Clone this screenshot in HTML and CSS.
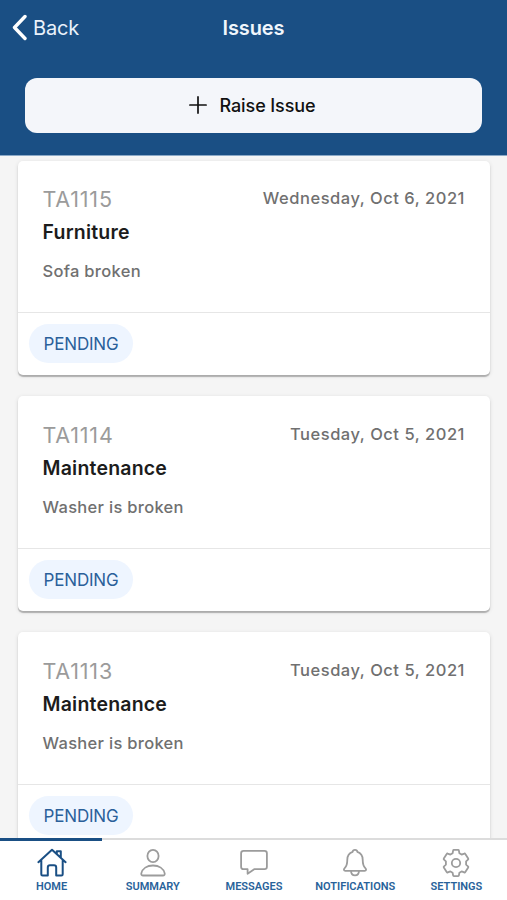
FILE: index.html
```html
<!DOCTYPE html>
<html lang="en">
<head>
    <meta charset="UTF-8">
    <meta name="viewport" content="width=device-width, initial-scale=1.0">
    <title>Issues</title>
    <link rel="stylesheet" href="styles.css">
</head>
<body>

    <header class="header">
        <div class="title-bar">
            <a class="back" href="#">
                <svg width="15" height="27" viewBox="0 0 15 27"><path d="M13 2.5 2.5 13.5 13 24.5"/></svg>
                <span>Back</span>
            </a>
            <h1>Issues</h1>
        </div>
        <button class="raise-issue">
            <svg width="18" height="18" viewBox="0 0 18 18"><path d="M9 .9v16.2M.9 9h16.2"/></svg>
            <span>Raise Issue</span>
        </button>
    </header>

    <main class="issues">
        <div class="card">
            <div class="card-body">
                <div class="card-top">
                    <span class="issue-id">TA1115</span>
                    <span class="date">Wednesday, Oct 6, 2021</span>
                </div>
                <h2>Furniture</h2>
                <p class="description">Sofa broken</p>
            </div>
            <div class="card-footer"><span class="status">PENDING</span></div>
        </div>

        <div class="card">
            <div class="card-body">
                <div class="card-top">
                    <span class="issue-id">TA1114</span>
                    <span class="date">Tuesday, Oct 5, 2021</span>
                </div>
                <h2>Maintenance</h2>
                <p class="description">Washer is broken</p>
            </div>
            <div class="card-footer"><span class="status">PENDING</span></div>
        </div>

        <div class="card">
            <div class="card-body">
                <div class="card-top">
                    <span class="issue-id">TA1113</span>
                    <span class="date">Tuesday, Oct 5, 2021</span>
                </div>
                <h2>Maintenance</h2>
                <p class="description">Washer is broken</p>
            </div>
            <div class="card-footer"><span class="status">PENDING</span></div>
        </div>
    </main>

    <nav class="tabs">
        <a class="tab active" href="#">
            <svg width="30" height="30" viewBox="0 0 30 30">
                <path d="M1.4 14.2 15 1.8l13.6 12.4M4.3 12v14.2q0 1.3 1.3 1.3h5.2v-8q0-2.2 2.2-2.2h4q2.2 0 2.2 2.2v8h5.2q1.3 0 1.3-1.3V12M19.8 5.7V3.2h4v6.3"/>
            </svg>
            <span>HOME</span>
        </a>
        <a class="tab" href="#">
            <svg width="30" height="30" viewBox="0 0 30 30">
                <ellipse cx="15" cy="8" rx="5.6" ry="6.2"/>
                <path d="M3.3 25.4C4.3 20.6 9 17.5 15 17.5s10.7 3.1 11.7 7.9q.3 2.1-1.8 2.1H5.1q-2.1 0-1.8-2.1Z"/>
            </svg>
            <span>SUMMARY</span>
        </a>
        <a class="tab" href="#">
            <svg width="30" height="30" viewBox="0 0 30 30">
                <path d="M4.5 2.8h21q2.4 0 2.4 2.4v13.6q0 2.4-2.4 2.4H15.2l-6.6 4.6v-4.6H4.5q-2.4 0-2.4-2.4V5.2q0-2.4 2.4-2.4Z"/>
            </svg>
            <span>MESSAGES</span>
        </a>
        <a class="tab" href="#">
            <svg width="30" height="30" viewBox="0 0 30 30">
                <path d="M15 1.8c1.5 0 2.2.8 2.3 2 3.8 1.3 5.4 4.2 5.4 7.9 0 5 1 7 2.8 8.6 1.1 1.1.6 2.5-.8 2.5H5.3c-1.4 0-1.9-1.4-.8-2.5 1.8-1.6 2.8-3.6 2.8-8.6 0-3.7 1.6-6.6 5.4-7.9.1-1.2.8-2 2.3-2ZM11 22.8c.2 6.2 7.8 6.2 8 0"/>
            </svg>
            <span>NOTIFICATIONS</span>
        </a>
        <a class="tab" href="#">
            <svg width="30" height="30" viewBox="0 0 30 30">
                <circle cx="15" cy="15" r="4.2"/>
                <path d="M12.9 1.9h4.2q.7 0 .8.7l.5 2.7 2.2 1.3 2.6-1q.7-.3 1.1.4l2.9 4.4q.4.7-.2 1.2l-1.9 1.7v3.4l1.9 1.7q.6.5.2 1.2L24.3 24q-.4.7-1.1.4l-2.6-1-2.2 1.3-.5 2.7q-.1.7-.8.7h-4.2q-.7 0-.8-.7l-.5-2.7-2.2-1.3-2.6 1q-.7.3-1.1-.4L2.8 19.6q-.4-.7.2-1.2l1.9-1.7v-3.4L3 11.6q-.6-.5-.2-1.2L5.7 6q.4-.7 1.1-.4l2.6 1 2.2-1.3.5-2.7q.1-.7.8-.7Z"/>
            </svg>
            <span>SETTINGS</span>
        </a>
    </nav>

</body>
</html>
```
FILE: styles.css
```css
* {
    box-sizing: border-box;
}
body {
    display: flex;
    flex-direction: column;
    height: 100vh;
    margin: 0;
    overflow: hidden;
    font-family: Inter, "Liberation Sans", sans-serif;
    background-color: #f5f5f5;
}
svg {
    flex: none;
    fill: none;
    stroke: currentColor;
    stroke-linecap: round;
    stroke-linejoin: round;
}
.header {
    flex: none;
    height: 156px;
    background-color: #1a4f84;
    border-bottom: 1px solid #8ba9c7;
}
.title-bar {
    display: grid;
    grid-template-columns: 1fr auto 1fr;
    align-items: center;
    height: 56px;
    padding: 0 12px;
    color: #fff;
}
.back {
    display: flex;
    align-items: center;
    gap: 6px;
    color: #e9f2fb;
    font-size: 20px;
    letter-spacing: -0.2px;
    text-decoration: none;
}
.back svg {
    margin-top: -2px;
    color: #fff;
    stroke-width: 3.4;
}
h1 {
    margin: 0;
    color: #f0f6fc;
    font-size: 20px;
    font-weight: 600;
    letter-spacing: -0.1px;
}
.raise-issue {
    display: flex;
    align-items: center;
    justify-content: center;
    gap: 13px;
    width: 457px;
    height: 55px;
    margin: 22px auto 0;
    padding: 0 3px 0 0;
    border: none;
    border-radius: 12px;
    background-color: #f4f6fa;
    color: #111;
    font-family: inherit;
    font-size: 18px;
    font-weight: 500;
    letter-spacing: -0.1px;
}
.raise-issue svg {
    margin-top: -1px;
    stroke-width: 1.7;
}
.issues {
    display: flex;
    flex: 1;
    flex-direction: column;
    gap: 21.5px;
    min-height: 0;
    padding: 4.6px 17px 0 18px;
    overflow: hidden;
}
.card {
    flex: none;
    height: 214.3px;
    border-radius: 5px;
    background-color: #fff;
    box-shadow: 0 2px 1px rgba(0, 0, 0, 0.24), 0 1px 4px rgba(0, 0, 0, 0.12);
}
.card-body {
    height: 152.6px;
    padding: 23.6px 24px 0 24.5px;
    border-bottom: 1px solid #e6e6e6;
}
.card-top {
    display: flex;
    justify-content: space-between;
    height: 35px;
}
.issue-id {
    color: #9b9b9b;
    font-size: 21.5px;
    letter-spacing: 0.8px;
    line-height: 30px;
}
.date {
    padding-right: 1px;
    color: #707070;
    font-size: 16.5px;
    font-weight: 500;
    letter-spacing: 0.53px;
    line-height: 28px;
}
h2 {
    margin: 0;
    color: #1c1c1c;
    font-size: 19.5px;
    font-weight: 600;
    letter-spacing: 0.2px;
    line-height: 27px;
}
.description {
    margin: 12px 0 0;
    color: #707070;
    font-size: 16.5px;
    font-weight: 500;
    letter-spacing: 0.3px;
    line-height: 26px;
}
.card-footer {
    padding: 11px;
}
.status {
    display: block;
    width: 104px;
    height: 39px;
    border-radius: 20px;
    background-color: #eef5ff;
    color: #2a609a;
    font-size: 17px;
    letter-spacing: -0.2px;
    line-height: 40px;
    text-align: center;
}
.tabs {
    display: flex;
    flex: none;
    height: 62px;
    background-color: #fff;
}
.tab {
    display: flex;
    flex: 1;
    flex-direction: column;
    align-items: center;
    padding: 8px 0 0;
    border-top: 2px solid #dcdcdc;
    color: #28629a;
    font-family: Roboto, sans-serif;
    font-size: 11px;
    font-weight: 600;
    line-height: 14px;
    text-decoration: none;
}
.tab svg {
    margin-bottom: 2px;
    color: #9c9c9c;
    stroke-width: 1.8;
}
.tab.active {
    padding: 7px 0 0 1px;
    border-top: 3px solid #1a4f84;
}
.tab.active svg {
    color: #1a4f84;
    stroke-width: 2;
}
```
